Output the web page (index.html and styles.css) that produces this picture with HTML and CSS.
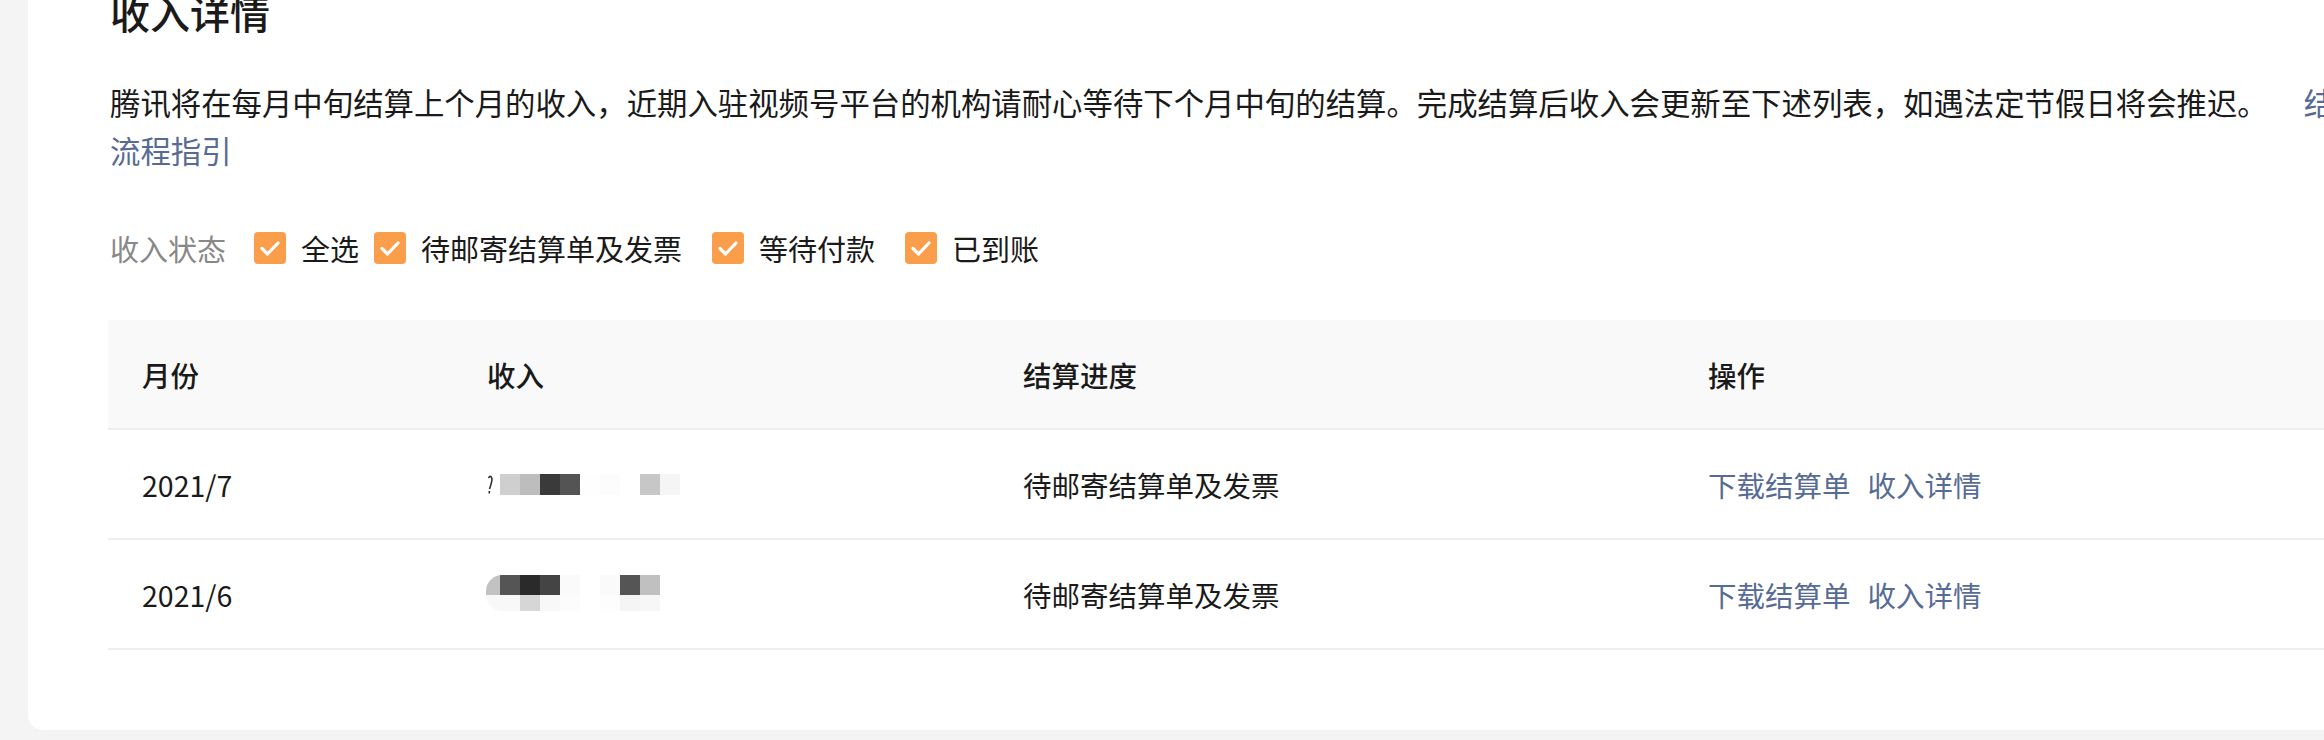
FILE: index.html
```html
<!DOCTYPE html>
<html lang="zh-CN">
<head>
<meta charset="utf-8">
<title>收入详情</title>
<link rel="stylesheet" href="styles.css">
</head>
<body>
<div class="page">
  <section class="card">
    <h2 class="title">收入详情</h2>
    <p class="desc">腾讯将在每月中旬结算上个月的收入，近期入驻视频号平台的机构请耐心等待下个月中旬的结算。完成结算后收入会更新至下述列表，如遇法定节假日将会推迟。<a class="link guide" href="#">结算流程指引</a></p>

    <div class="filter">
      <span class="filter-label">收入状态</span>
      <label class="check check-all">
        <svg class="box" viewBox="0 0 32 32" width="32" height="32"><rect x="0" y="0" width="32" height="32" rx="4" fill="#fa9e4b"/><polyline points="8,16.5 13.5,22 24,11" fill="none" stroke="#fff" stroke-width="3.2" stroke-linecap="round" stroke-linejoin="round"/></svg>
        <span>全选</span>
      </label>
      <label class="check">
        <svg class="box" viewBox="0 0 32 32" width="32" height="32"><rect x="0" y="0" width="32" height="32" rx="4" fill="#fa9e4b"/><polyline points="8,16.5 13.5,22 24,11" fill="none" stroke="#fff" stroke-width="3.2" stroke-linecap="round" stroke-linejoin="round"/></svg>
        <span>待邮寄结算单及发票</span>
      </label>
      <label class="check">
        <svg class="box" viewBox="0 0 32 32" width="32" height="32"><rect x="0" y="0" width="32" height="32" rx="4" fill="#fa9e4b"/><polyline points="8,16.5 13.5,22 24,11" fill="none" stroke="#fff" stroke-width="3.2" stroke-linecap="round" stroke-linejoin="round"/></svg>
        <span>等待付款</span>
      </label>
      <label class="check">
        <svg class="box" viewBox="0 0 32 32" width="32" height="32"><rect x="0" y="0" width="32" height="32" rx="4" fill="#fa9e4b"/><polyline points="8,16.5 13.5,22 24,11" fill="none" stroke="#fff" stroke-width="3.2" stroke-linecap="round" stroke-linejoin="round"/></svg>
        <span>已到账</span>
      </label>
    </div>

    <div class="table">
      <div class="row head">
        <div class="cell">月份</div>
        <div class="cell">收入</div>
        <div class="cell">结算进度</div>
        <div class="cell">操作</div>
      </div>
      <div class="row">
        <div class="cell">2021/7</div>
        <div class="cell">
          <svg class="mosaic" viewBox="0 0 200 40" width="200" height="40" aria-label="已打码金额">
            <path d="M2.5 14 Q4.5 10.5 6 14.5 Q6 18 3.5 25" fill="none" stroke="#333" stroke-width="1.6"/>
            <rect x="2.5" y="27" width="1.6" height="2.5" fill="#333"/>
            <rect x="14" y="10" width="20" height="21" fill="#cfcfcf"/>
            <rect x="34" y="10" width="20" height="21" fill="#bdbdbd"/>
            <rect x="54" y="10" width="20" height="21" fill="#3a3a3a"/>
            <rect x="74" y="10" width="20" height="21" fill="#545454"/>
            <rect x="94" y="10" width="20" height="21" fill="#fefefe"/>
            <rect x="114" y="10" width="20" height="21" fill="#fcfcfc"/>
            <rect x="154" y="10" width="20" height="21" fill="#c7c7c7"/>
            <rect x="174" y="10" width="20" height="21" fill="#f5f5f5"/>
          </svg>
        </div>
        <div class="cell">待邮寄结算单及发票</div>
        <div class="cell actions"><a class="link" href="#">下载结算单</a><a class="link" href="#">收入详情</a></div>
      </div>
      <div class="row">
        <div class="cell">2021/6</div>
        <div class="cell">
          <svg class="mosaic" viewBox="0 0 200 40" width="200" height="40" aria-label="已打码金额">
            <defs><clipPath id="m2"><rect x="0" y="1" width="300" height="36" rx="16"/></clipPath></defs>
            <g clip-path="url(#m2)">
              <rect x="0" y="1" width="14" height="20" fill="#c2c2c2"/>
              <rect x="14" y="1" width="20" height="20" fill="#555555"/>
              <rect x="34" y="1" width="20" height="20" fill="#2a2a2a"/>
              <rect x="54" y="1" width="20" height="20" fill="#444444"/>
              <rect x="74" y="1" width="20" height="20" fill="#fafafa"/>
              <rect x="114" y="1" width="20" height="20" fill="#fafafa"/>
              <rect x="134" y="1" width="20" height="20" fill="#555555"/>
              <rect x="154" y="1" width="20" height="20" fill="#c0c0c0"/>
              <rect x="0" y="21" width="34" height="16" fill="#f8f8f8"/>
              <rect x="34" y="21" width="20" height="16" fill="#d6d6d6"/>
              <rect x="54" y="21" width="20" height="16" fill="#f8f8f8"/>
              <rect x="74" y="21" width="20" height="16" fill="#fcfcfc"/>
              <rect x="114" y="21" width="20" height="16" fill="#fdfdfd"/>
              <rect x="134" y="21" width="20" height="16" fill="#f5f5f5"/>
              <rect x="154" y="21" width="20" height="16" fill="#f7f7f7"/>
            </g>
          </svg>
        </div>
        <div class="cell">待邮寄结算单及发票</div>
        <div class="cell actions"><a class="link" href="#">下载结算单</a><a class="link" href="#">收入详情</a></div>
      </div>
    </div>
  </section>
</div>
</body>
</html>
```

FILE: styles.css
```css
* {
  box-sizing: border-box;
}

html, body {
  margin: 0;
  padding: 0;
}

body {
  width: 2324px;
  height: 740px;
  overflow: hidden;
  background: #f4f4f4;
  font-family: "Noto Sans CJK SC", "Noto Sans", "Liberation Sans", sans-serif;
  color: #1a1a1a;
}

.page {
  display: flex;
  padding-left: 28px;
}

.card {
  flex: 0 0 2440px;
  width: 2440px;
  background: #ffffff;
  border-radius: 0 0 15px 15px;
  padding: 0 80px 80px 80px;
}

.title {
  margin: -8px 0 0 0;
  padding-left: 2px;
  font-size: 40px;
  line-height: 40px;
  font-weight: 500;
  color: #1a1a1a;
}

.desc {
  margin: 46px 0 0 0;
  padding-left: 2px;
  max-width: 2282px;
  font-size: 30.4px;
  line-height: 48px;
  color: #1a1a1a;
}

.link {
  color: #576b95;
  text-decoration: none;
}

.guide {
  margin-left: 36px;
}

.filter {
  margin-top: 58px;
  padding-left: 2px;
  height: 32px;
  display: flex;
  align-items: center;
  font-size: 29px;
  line-height: 32px;
}

.filter-label {
  color: #888888;
  margin-right: 28px;
}

.check {
  display: flex;
  align-items: center;
  gap: 15px;
  margin-right: 30px;
  color: #1a1a1a;
}

.check-all {
  margin-right: 15px;
}

.box {
  display: block;
  flex: 0 0 32px;
}

.table {
  margin-top: 56px;
}

.row {
  display: grid;
  grid-template-columns: 345px 536px 685px 1fr;
  border-bottom: 2px solid #eeeeee;
}

.cell {
  height: 108px;
  padding-left: 34px;
  display: flex;
  align-items: center;
  font-size: 28.5px;
  color: #1a1a1a;
}

.head {
  background: #f9f9f9;
}

.head .cell {
  font-weight: 500;
}

.mosaic {
  display: block;
  margin-left: -1px;
}

.actions .link + .link {
  margin-left: 17px;
}
```
